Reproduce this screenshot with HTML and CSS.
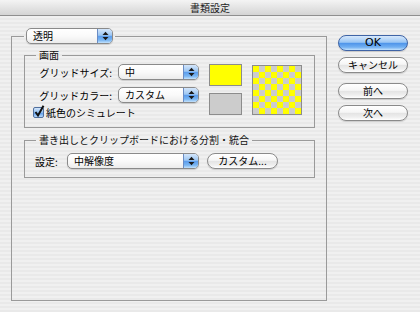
FILE: index.html
```html
<!DOCTYPE html>
<html lang="ja">
  <head>
    <meta charset="UTF-8" />
    <meta name="viewport" content="width=device-width, initial-scale=1.0" />
    <link rel="stylesheet" href="styles.css">
  </head>
  <body>
    <div class="window">
      <div class="titlebar">書類設定</div>

      <div class="content">
        <fieldset class="group outer">
          <legend class="outer-legend">
            <div class="popup popup-mode">
              <span class="popup-text">透明</span>
              <span class="popup-arrows">
                <svg width="7" height="10" viewBox="0 0 7 10"><polygon points="0.5,4 3.5,0.8 6.5,4" /><polygon points="0.5,6 3.5,9.2 6.5,6" /></svg>
              </span>
            </div>
          </legend>

          <fieldset class="group inner screen">
            <legend>画面</legend>
            <div class="screen-body">
              <div class="form-col">
                <div class="field-row">
                  <span class="label">グリッドサイズ:</span>
                  <div class="popup popup-grid">
                    <span class="popup-text">中</span>
                    <span class="popup-arrows">
                      <svg width="7" height="10" viewBox="0 0 7 10"><polygon points="0.5,4 3.5,0.8 6.5,4" /><polygon points="0.5,6 3.5,9.2 6.5,6" /></svg>
                    </span>
                  </div>
                </div>
                <div class="field-row second">
                  <span class="label">グリッドカラー:</span>
                  <div class="popup popup-grid">
                    <span class="popup-text">カスタム</span>
                    <span class="popup-arrows">
                      <svg width="7" height="10" viewBox="0 0 7 10"><polygon points="0.5,4 3.5,0.8 6.5,4" /><polygon points="0.5,6 3.5,9.2 6.5,6" /></svg>
                    </span>
                  </div>
                </div>
                <label class="check-row">
                  <span class="checkbox">
                    <svg width="12" height="13" viewBox="0 0 12 13"><path d="M2.5 7 L5 10.5 L10.5 0.8" /></svg>
                  </span>
                  紙色のシミュレート
                </label>
              </div>

              <div class="swatches">
                <div class="swatch swatch-yellow"></div>
                <div class="swatch swatch-gray"></div>
              </div>

              <div class="checker"></div>
            </div>
          </fieldset>

          <fieldset class="group inner export">
            <legend>書き出しとクリップボードにおける分割・統合</legend>
            <div class="export-body">
              <span class="export-label">設定:</span>
              <div class="popup popup-preset">
                <span class="popup-text">中解像度</span>
                <span class="popup-arrows">
                  <svg width="7" height="10" viewBox="0 0 7 10"><polygon points="0.5,4 3.5,0.8 6.5,4" /><polygon points="0.5,6 3.5,9.2 6.5,6" /></svg>
                </span>
              </div>
              <button type="button" class="btn btn-custom">カスタム...</button>
            </div>
          </fieldset>
        </fieldset>

        <div class="buttons">
          <button type="button" class="btn btn-default">OK</button>
          <button type="button" class="btn btn-cancel">キャンセル</button>
          <button type="button" class="btn btn-prev">前へ</button>
          <button type="button" class="btn btn-next">次へ</button>
        </div>
      </div>
    </div>
  </body>
</html>
```

FILE: styles.css
```css
body {
  margin: 0;
  font-family: "Noto Sans CJK JP", sans-serif;
  font-size: 10px;
  color: #000;
}
.window {
  width: 420px;
  height: 312px;
  overflow: hidden;
  background: repeating-linear-gradient(#f0f0f0 0 2px, #e9e9e9 2px 4px);
}
.titlebar {
  height: 15px;
  line-height: 15px;
  text-align: center;
  color: #222;
  background: linear-gradient(#f4f4f4, #d4d4d4);
  border-bottom: 1px solid #8f8f8f;
}
.content {
  display: flex;
  padding-left: 11px;
}

/* group boxes */
.group {
  margin: 0;
  padding: 0;
  min-width: 0;
  border: 1px solid #9a9a9a;
}
.outer {
  box-sizing: border-box;
  width: 316px;
  height: 273px;
  margin-top: 12px;
}
.outer-legend {
  padding: 0 2px;
  margin-left: 12px;
}
.inner > legend {
  padding: 0 3px;
  margin-left: 11px;
  line-height: 12px;
  color: #111;
}
.screen {
  margin: 5px 11px 0 12px;
}
.export {
  margin: 6px 11px 0 12px;
}

/* popup menus */
.popup {
  display: flex;
  box-sizing: border-box;
  height: 16px;
  border: 1px solid #8a8a8a;
  border-radius: 5px;
  overflow: hidden;
  background: linear-gradient(#ffffff 0%, #fafafa 50%, #ececec 100%);
  box-shadow: 0 1px 1px rgba(0, 0, 0, 0.15);
}
.popup-text {
  flex: 1;
  padding-left: 6px;
  line-height: 14px;
  white-space: nowrap;
}
.popup-arrows {
  width: 14px;
  display: flex;
  align-items: center;
  justify-content: center;
  border-left: 1px solid #6a8cc4;
  background: linear-gradient(#d4e6fb 0%, #9cc6f2 45%, #5c9ded 52%, #7ab6f2 80%, #c4e2fc 100%);
}
.popup-arrows svg {
  fill: #1a1a1a;
}
.popup-mode {
  width: 87px;
}
.popup-grid {
  width: 81px;
}
.popup-preset {
  width: 132px;
}

/* 画面 */
.screen-body {
  display: flex;
  padding: 3px 0 9px 8px;
}
.form-col {
  width: 166px;
}
.field-row {
  display: flex;
  align-items: center;
  height: 16px;
}
.field-row.second {
  margin-top: 7px;
}
.label {
  width: 79px;
  margin-right: 6px;
  text-align: right;
  white-space: nowrap;
}
.check-row {
  display: flex;
  align-items: center;
  height: 12px;
  margin-top: 3px;
  white-space: nowrap;
}
.checkbox {
  position: relative;
  box-sizing: border-box;
  width: 11px;
  height: 11px;
  margin-right: 2px;
  border: 1px solid #50709e;
  border-radius: 2px;
  background: linear-gradient(#d4e6fb 0%, #8dbdf0 50%, #5c9ded 55%, #b8dafb 100%);
}
.checkbox svg {
  position: absolute;
  left: -1px;
  top: -3px;
}
.checkbox path {
  fill: none;
  stroke: #111;
  stroke-width: 2;
}
.swatches {
  display: flex;
  flex-direction: column;
  gap: 7px;
  margin-left: 10px;
}
.swatch {
  width: 31px;
  height: 20px;
  border: 1px solid #8c8c8c;
}
.swatch-yellow {
  background: #ffff00;
}
.swatch-gray {
  background: #cccccc;
}
.checker {
  width: 48px;
  height: 48px;
  margin: 1px 0 0 10px;
  border: 1px solid #8c8c8c;
  background: conic-gradient(#cccccc 0 25%, #ffff00 0 50%, #cccccc 0 75%, #ffff00 0);
  background-size: 12px 12px;
}

/* 書き出し */
.export-body {
  display: flex;
  align-items: center;
  padding: 7px 0 8px 10px;
}
.export-label {
  width: 32px;
}

/* buttons */
.btn {
  box-sizing: border-box;
  height: 16px;
  padding: 0;
  border: 1px solid #8a8a8a;
  border-radius: 8px;
  font-family: "Noto Sans CJK JP", sans-serif;
  font-size: 10px;
  line-height: 14px;
  color: #000;
  background: linear-gradient(#ffffff 0%, #f6f6f6 45%, #e4e4e4 52%, #efefef 80%, #ffffff 100%);
  box-shadow: 0 1px 1px rgba(0, 0, 0, 0.15);
}
.btn-custom {
  width: 71px;
  margin-left: 8px;
}
.buttons {
  display: flex;
  flex-direction: column;
  width: 70px;
  margin-left: 11px;
  padding-top: 19px;
}
.btn-default {
  font-family: "DejaVu Sans", sans-serif;
  font-size: 11px;
  border-color: #3f64a6;
  background: linear-gradient(#d6e8fc 0%, #9ac6f4 45%, #4f95ea 52%, #72b0f2 80%, #c6e4fd 100%);
}
.btn-cancel {
  margin-top: 6px;
}
.btn-prev {
  margin-top: 10px;
}
.btn-next {
  margin-top: 6px;
}
```
